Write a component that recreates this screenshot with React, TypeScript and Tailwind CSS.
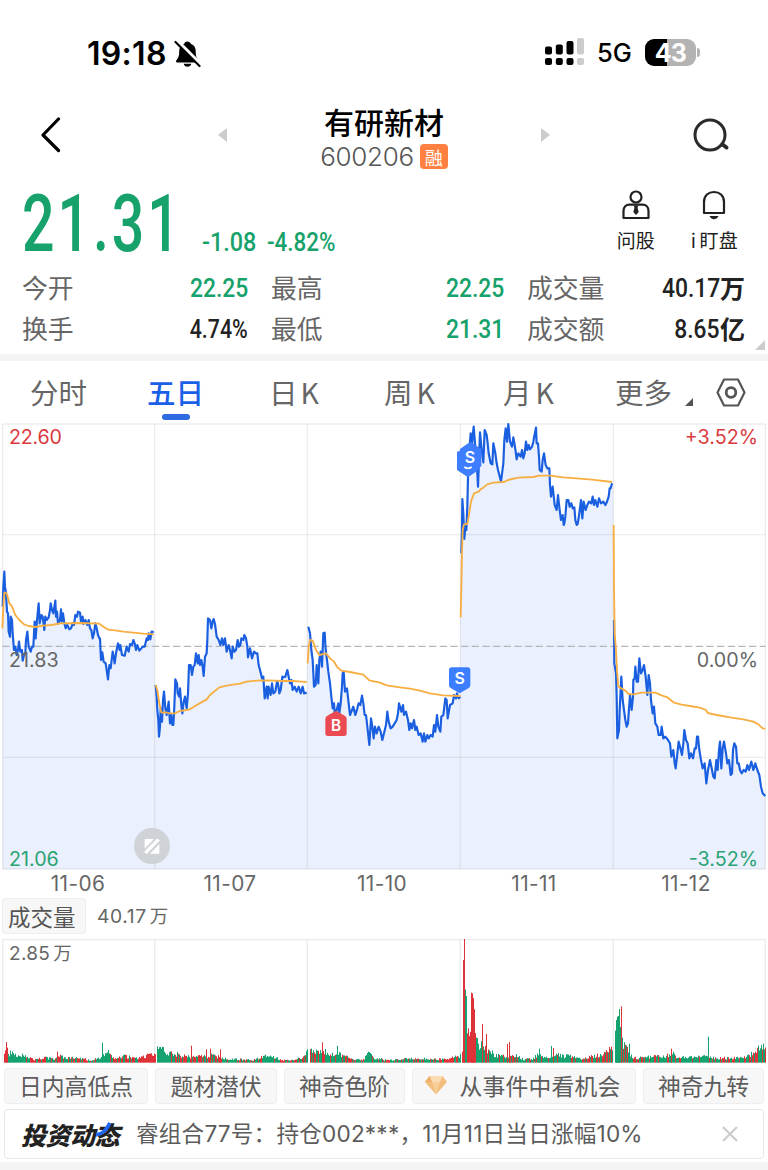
import clsx from "clsx";

const CJK = "font-['Noto_Sans_CJK_SC',sans-serif]";
const SANS = "font-['Inter','Noto_Sans_CJK_SC',sans-serif]";

const stats = [
  { label: "今开", value: "22.25", tone: "down" },
  { label: "最高", value: "22.25", tone: "down" },
  { label: "成交量", value: "40.17", unit: "万" },
  { label: "换手", value: "4.74%" },
  { label: "最低", value: "21.31", tone: "down" },
  { label: "成交额", value: "8.65", unit: "亿" },
];

const dates = ["11-06", "11-07", "11-10", "11-11", "11-12"];

// Chart space is 2304 x 1350, three units per pixel
const edges = [8, 464, 922, 1381, 1840, 2296];

const days = [
  {
    price:
      "8,560 10,500 13,455 15,500 18,520 21,575 24,580 26,635 30,650 32,590 36,600 38,640 42,690 46,680 50,705 54,690 57,665 61,695 66,690 68,722 72,705 76,700 78,660 82,635 86,680 92,695 96,680 100,680 102,640 104,605 107,655 111,600 116,550 119,610 124,585 128,590 133,630 136,590 140,600 146,592 150,570 152,550 156,570 160,580 166,542 168,590 171,575 174,610 180,600 183,568 185,605 189,580 193,610 197,625 202,615 208,628 213,625 218,610 222,615 226,585 231,590 234,575 240,578 243,605 248,590 250,612 256,600 262,615 266,600 270,625 274,630 278,655 282,640 286,610 290,625 294,645 298,655 300,655 303,720 307,697 311,725 317,730 320,750 324,778 328,735 332,745 338,695 341,710 344,730 348,700 354,670 359,690 361,675 366,705 374,707 380,680 386,695 390,672 396,675 400,660 404,670 408,690 412,675 418,692 424,685 428,680 434,680 440,655 444,660 446,640 451,658 455,635 461,636",
    average:
      "7,625 10,560 13,518 20,520 28,550 36,560 46,585 58,600 72,613 86,618 105,621 130,617 155,615 180,610 240,609 298,611 310,620 325,629 345,631 370,635 400,638 430,641 461,643",
  },
  {
    price:
      "467,795 470,830 472,870 475,900 477,950 480,920 482,865 486,905 489,840 492,815 496,865 500,885 506,845 510,910 514,885 517,915 520,915 523,860 526,778 531,790 533,820 538,830 540,805 544,855 547,880 551,845 555,830 560,865 564,820 567,735 572,735 576,765 580,740 584,735 588,700 593,730 596,705 600,735 604,720 608,740 611,768 615,710 620,700 622,660 624,595 630,600 634,625 638,605 641,597 645,612 650,650 656,660 661,675 666,655 670,675 675,655 680,695 686,675 690,690 695,715 698,680 703,695 708,690 713,660 717,680 721,675 724,655 730,660 733,645 738,655 742,680 744,712 750,685 756,715 762,695 768,700 772,700 776,735 780,750 786,775 790,770 794,835 800,800 803,835 806,800 812,825 816,790 820,820 826,815 831,785 834,790 838,820 842,810 847,770 850,772 856,770 862,750 865,765 870,790 874,780 878,810 884,800 890,815 896,800 902,820 908,800 912,820 920,818",
    average:
      "467,795 472,810 478,850 484,878 498,877 510,880 525,880 540,873 567,869 590,855 620,838 630,825 658,802 680,797 720,791 740,785 768,782 800,781 850,783 880,783 905,785 920,786",
  },
  {
    price:
      "925,620 930,640 934,690 938,720 942,800 947,795 950,735 955,790 958,720 962,695 966,740 970,640 974,638 977,690 981,720 985,755 990,790 994,830 998,865 1002,850 1005,890 1010,870 1015,850 1018,880 1022,850 1026,800 1028,760 1031,755 1035,815 1041,805 1046,850 1050,885 1056,870 1060,860 1066,885 1072,865 1076,850 1081,855 1086,827 1090,850 1094,885 1098,885 1102,920 1108,975 1113,895 1117,920 1121,955 1125,920 1130,940 1136,920 1142,935 1147,960 1152,940 1158,915 1162,875 1166,905 1172,925 1178,920 1184,910 1190,900 1194,880 1197,850 1204,875 1209,855 1212,885 1218,875 1224,900 1228,930 1232,910 1236,925 1242,900 1246,930 1250,920 1256,945 1262,940 1268,965 1272,940 1276,965 1282,945 1286,955 1292,945 1298,950 1302,915 1306,935 1311,885 1315,920 1321,935 1324,890 1330,885 1336,835 1340,840 1343,895 1350,855 1358,850 1362,825 1368,835 1371,820 1376,835 1381,830",
    average:
      "923,730 926,680 930,660 938,662 948,690 958,705 978,700 990,715 1002,725 1012,742 1025,752 1050,756 1090,764 1108,781 1140,788 1160,796 1200,802 1230,806 1260,812 1290,820 1330,826 1381,828",
  },
  {
    price:
      "1384,400 1386,330 1387,237 1390,280 1393,357 1396,320 1399,330 1402,260 1404,170 1408,90 1412,40 1416,70 1421,20 1425,70 1430,120 1434,200 1440,37 1445,90 1450,127 1454,30 1460,45 1463,70 1466,100 1472,130 1477,133 1480,70 1486,100 1490,130 1494,150 1498,165 1503,185 1510,130 1513,60 1517,25 1521,65 1525,12 1530,65 1536,80 1540,52 1544,75 1547,95 1550,118 1555,100 1562,110 1566,90 1570,115 1574,100 1578,65 1582,90 1586,75 1590,88 1596,80 1600,65 1603,48 1608,23 1610,70 1614,70 1617,110 1619,150 1625,155 1628,120 1632,100 1637,135 1642,145 1648,145 1650,195 1653,230 1658,200 1664,255 1670,270 1674,225 1679,270 1683,300 1688,285 1691,315 1693,310 1696,290 1700,240 1705,240 1709,260 1714,250 1718,265 1723,262 1726,300 1730,315 1733,312 1738,280 1743,240 1747,295 1751,245 1757,270 1762,255 1767,245 1774,250 1778,230 1782,255 1786,240 1792,260 1797,235 1803,250 1810,245 1816,255 1821,245 1826,230 1829,205 1832,205 1836,190",
    average:
      "1382,592 1384,500 1386,400 1388,330 1392,313 1402,312 1406,290 1413,245 1422,220 1436,215 1442,208 1450,203 1462,193 1480,188 1512,186 1524,180 1536,177 1556,173 1600,171 1618,167 1650,167 1690,172 1730,175 1776,179 1836,186",
  },
  {
    price:
      "1842,600 1843,730 1848,760 1850,830 1852,955 1857,930 1859,870 1864,770 1868,840 1872,870 1876,900 1880,920 1884,910 1886,880 1890,825 1895,870 1899,830 1900,780 1904,775 1906,740 1910,785 1914,785 1918,715 1923,760 1928,750 1932,735 1937,770 1942,825 1946,765 1950,790 1953,840 1958,880 1962,860 1966,910 1972,920 1976,945 1982,945 1985,920 1990,955 1996,950 2004,960 2010,970 2014,1010 2020,990 2024,1030 2027,1045 2031,1010 2036,965 2040,980 2046,1005 2050,970 2053,930 2058,960 2063,970 2068,1015 2073,1000 2079,1015 2084,985 2088,985 2091,950 2094,950 2098,990 2103,1020 2108,1045 2114,1030 2119,1090 2124,1050 2130,1020 2136,1050 2140,1070 2144,1075 2149,1020 2153,1050 2157,990 2160,965 2164,1045 2168,985 2172,965 2178,1000 2182,1030 2187,1020 2192,1065 2196,1060 2199,990 2203,970 2208,980 2212,1030 2216,1030 2220,1050 2225,1060 2231,1050 2237,1055 2242,1035 2247,1050 2254,1025 2260,1050 2266,1030 2272,1050 2278,1065 2283,1100 2288,1120 2296,1128",
    average:
      "1841,315 1842,500 1844,640 1848,690 1851,750 1855,800 1864,805 1876,812 1886,822 1900,823 1925,818 1966,818 1985,826 2002,832 2022,848 2045,854 2070,858 2100,863 2118,870 2123,879 2150,885 2190,892 2230,898 2260,905 2275,913 2288,925 2296,926",
  },
];

// [x, height, share of red bars] knots, interpolated between
const volume = [
  [[12, 45, 1], [20, 62, 1], [26, 38, 0.2], [45, 30, 0.1], [66, 34, 0.2], [82, 24, 0.6], [100, 11, 0.5], [135, 20, 0.6], [160, 14, 0.3], [175, 26, 0.6], [200, 18, 0.4], [240, 18, 0.7], [272, 8, 0.2], [300, 22, 0.1], [325, 34, 0.1], [340, 16, 0.3], [370, 26, 0.5], [410, 17, 0.6], [440, 28, 0.9], [465, 38, 0.8]],
  [[471, 55, 0.3], [484, 56, 0.1], [500, 32, 0.1], [520, 38, 0.2], [540, 30, 0.5], [560, 24, 0.4], [600, 24, 0.4], [640, 28, 0.3], [665, 20, 0.3], [690, 12, 0.2], [720, 14, 0.4], [760, 10, 0.4], [790, 30, 0.1], [825, 24, 0.3], [845, 9, 0.5], [880, 13, 0.6], [910, 20, 0.3], [922, 44, 0.2]],
  [[930, 54, 0.9], [945, 42, 0.4], [968, 46, 0.5], [985, 34, 0.1], [1010, 42, 0.1], [1035, 24, 0.4], [1065, 12, 0.4], [1090, 12, 0.3], [1103, 38, 0.1], [1125, 18, 0.2], [1165, 9, 0.4], [1230, 16, 0.2], [1290, 15, 0.4], [1340, 14, 0.7], [1380, 28, 0.5]],
  [[1387, 40, 1], [1389, 235, 1], [1394, 340, 1], [1397, 200, 0.1], [1402, 100, 0.3], [1408, 130, 0.7], [1414, 215, 1], [1420, 200, 1], [1426, 100, 0.5], [1436, 66, 0.1], [1450, 66, 0.3], [1465, 48, 0.4], [1485, 30, 0.3], [1520, 26, 0.4], [1545, 28, 0.4], [1570, 13, 0.3], [1600, 16, 0.4], [1617, 38, 0.2], [1635, 18, 0.3], [1662, 36, 0.2], [1690, 26, 0.2], [1715, 24, 0.2], [1740, 16, 0.5], [1775, 24, 0.4], [1800, 32, 0.6], [1839, 56, 0.9]],
  [[1846, 130, 0], [1852, 142, 0], [1858, 160, 0], [1863, 165, 0.5], [1868, 78, 0.3], [1880, 52, 0.2], [1900, 20, 0.6], [1930, 20, 0.2], [1965, 26, 0.1], [1985, 20, 0.2], [2018, 38, 0.4], [2030, 18, 0.5], [2075, 24, 0.1], [2120, 24, 0.4], [2150, 18, 0.4], [2190, 18, 0.7], [2230, 18, 0.4], [2256, 34, 0.4], [2275, 54, 0.4], [2296, 66, 0.3]],
];

const spikes = [
  { x: 20, h: 62, up: true },
  { x: 171, h: 33, up: true },
  { x: 308, h: 60, up: false },
  { x: 324, h: 38, up: false },
  { x: 575, h: 51, up: true },
  { x: 618, h: 40, up: true },
  { x: 630, h: 42, up: true },
  { x: 662, h: 40, up: true },
  { x: 968, h: 61, up: true },
  { x: 1011, h: 50, up: false },
  { x: 1391, h: 308, up: true },
  { x: 1394, h: 371, up: true },
  { x: 1398, h: 200, up: false },
  { x: 1413, h: 210, up: true },
  { x: 1416, h: 208, up: true },
  { x: 1419, h: 194, up: true },
  { x: 1422, h: 160, up: true },
  { x: 1447, h: 116, up: true },
  { x: 1460, h: 86, up: true },
  { x: 1522, h: 56, up: true },
  { x: 1529, h: 62, up: true },
  { x: 1617, h: 42, up: false },
  { x: 1654, h: 50, up: false },
  { x: 1659, h: 44, up: true },
  { x: 1848, h: 128, up: false },
  { x: 1851, h: 138, up: false },
  { x: 1855, h: 140, up: false },
  { x: 1859, h: 161, up: false },
  { x: 1864, h: 169, up: true },
  { x: 1889, h: 57, up: false },
  { x: 2013, h: 42, up: true },
  { x: 2124, h: 78, up: false },
];

function noise(n: number) {
  const v = Math.sin(n * 12.9898) * 43758.5453;
  return v - Math.floor(v);
}

function buildBars() {
  const bars: { x: number; h: number; up: boolean }[] = [];
  volume.forEach((knots) => {
    const end = knots[knots.length - 1][0];
    let i = 0;
    for (let x = knots[0][0]; x <= end; x += 3) {
      while (i < knots.length - 2 && x > knots[i + 1][0]) i++;
      const [x0, h0, r0] = knots[i];
      const [x1, h1, r1] = knots[i + 1];
      const t = (x - x0) / (x1 - x0);
      const scale = h0 + (h1 - h0) * t;
      bars.push({
        x,
        h: Math.max(5, scale * (0.5 + 0.5 * noise(x))),
        up: noise(x + 7777) < r0 + (r1 - r0) * t,
      });
    }
  });
  return [...bars, ...spikes];
}

const bars = buildBars();

function Num({ children, className }: { children: string; className?: string }) {
  return (
    <span className={clsx("inline-block font-['Roboto',sans-serif] font-medium tabular-nums", className)}>
      {children}
    </span>
  );
}

function StatusBar() {
  return (
    <div className={clsx(SANS, "flex h-[90px] items-start justify-between pt-[37px] pr-[68px] pl-[87px] text-black")}>
      <div className="flex items-center gap-[7px]">
        <span className="w-[80px] pt-px text-[32px] leading-[32px] font-semibold tracking-[0.300px]">19:18</span>
        <svg width="27" height="28" viewBox="0 0 27 28">
          <path
            d="M13.5 1.5c1.7 0 2.9 1 3.2 2.2 3.5 1.1 5 4 5 7.400 0 5.500 1 7 2.800 9.300.8 1 .3 2-.9 2H3.300c-1.300 0-1.700-1.100-1-2 2-2.400 2.900-3.800 2.900-9.300 0-3.400 1.600-6.300 5.100-7.400.3-1.300 1.500-2.200 3.200-2.200zM9.700 23.800h7.600c-.3 1.900-1.900 3-3.800 3s-3.500-1.100-3.800-3z"
            fill="#000"
          />
          <path d="M3.200 .8 27 24.500" stroke="#fff" strokeWidth="3.500" />
          <path d="M1.500 2 25.500 26" stroke="#000" strokeWidth="2.200" strokeLinecap="round" />
        </svg>
      </div>
      <div className="flex items-center">
        <svg width="39" height="28" viewBox="0 0 39 28">
          <rect x="0" y="8.500" width="7" height="8" rx="2" />
          <rect x="10.800" y="6.500" width="7" height="10" rx="2" />
          <rect x="21.500" y="3" width="7" height="13.500" rx="2" />
          <rect x="32" y="0" width="7" height="16.500" rx="2" fill="#ccc" />
          <rect x="0" y="20" width="7" height="7" rx="2" />
          <rect x="10.800" y="20" width="7" height="7" rx="2" />
          <rect x="21.500" y="20" width="7" height="7" rx="2" />
          <rect x="32" y="20" width="7" height="7" rx="2" fill="#ccc" />
        </svg>
        <span className="ml-[13px] w-[48px] pt-[2px] text-[25.500px] leading-[28px] font-medium">5G</span>
        <div className="flex items-center gap-px">
          <div className="flex h-[27px] w-[51px] items-center justify-center rounded-[9px] bg-[linear-gradient(90deg,#000_44%,#b3b3b3_44%)] pt-[2px] text-[25px] leading-[25px] font-bold tracking-[-0.800px] text-white">
            43
          </div>
          <span className="h-[9px] w-[3px] rounded-r-full bg-[#b3b3b3]" />
        </div>
      </div>
    </div>
  );
}

function TitleBar() {
  return (
    <header className="flex h-[90px] items-center pl-[40px]">
      <svg width="22" height="36" viewBox="0 0 22 36" fill="none" stroke="#000" strokeWidth="3.200" strokeLinecap="round" strokeLinejoin="round">
        <path d="M18.500 2 3 18l15.500 15.500" />
      </svg>
      <div className="ml-[156px] flex w-[332px] items-center justify-between">
        <svg width="9" height="14" viewBox="0 0 9 14" fill="#ccc">
          <path d="M9 0v14L0 7z" />
        </svg>
        <div className="flex flex-col items-center gap-[2px] pt-[5px]">
          <h1 className={clsx(CJK, "text-[30px] leading-[36px] font-medium text-black")}>有研新材</h1>
          <div className="flex items-center gap-[6px]">
            <span className={clsx(SANS, "text-[26px] leading-[32px] font-light tracking-[-0.300px] text-[#555]")}>600206</span>
            <span className={clsx(CJK, "flex h-[25px] w-[28px] items-center justify-center rounded-[4px] bg-[#ff8040] text-[18px] leading-none text-white")}>
              融
            </span>
          </div>
        </div>
        <svg width="9" height="14" viewBox="0 0 9 14" fill="#ccc">
          <path d="M0 0v14l9-7z" />
        </svg>
      </div>
      <svg className="ml-[142px]" width="38" height="36" viewBox="0 0 38 36" fill="none" stroke="#2b2b2b" strokeWidth="3" strokeLinecap="round">
        <circle cx="18" cy="18" r="15" />
        <path d="m30.500 27.500 4 3" strokeWidth="4" />
      </svg>
    </header>
  );
}

function Quote() {
  return (
    <section className="flex h-[88px] justify-between pr-[30px] pl-[22px] text-[#16a26a]">
      <div className="flex items-baseline">
        <Num className="w-[180px] origin-left scale-x-[.725] text-[79px] leading-[88px] font-medium tracking-[4px]">21.31</Num>
        <Num className="w-[65px] origin-left scale-x-[.9] text-[26px]">-1.08</Num>
        <Num className="origin-left scale-x-[.86] text-[26px]">-4.82%</Num>
      </div>
      <div className={clsx(CJK, "flex gap-[36px] pt-[10px] text-[19px] leading-[24px] text-[#222]")}>
        <button className="flex flex-col items-center gap-[8px]">
          <svg width="28" height="30" viewBox="0 0 28 30" fill="none" stroke="#222" strokeWidth="2.200" strokeLinejoin="round">
            <circle cx="14" cy="7" r="5.500" />
            <path d="M1.500 28V21c0-4 2.500-6.300 6-6.300h13c3.500 0 6 2.300 6 6.300v7z" />
            <path d="M12.500 16h3l-.5 2 1.200 4-2.200 2.500-2.200-2.500 1.200-4z" fill="#222" strokeWidth="1" />
          </svg>
          <span>问股</span>
        </button>
        <button className="flex flex-col items-center gap-[8px]">
          <svg width="24" height="30" viewBox="0 0 24 30" fill="none" stroke="#222" strokeWidth="2.200">
            <path d="M2 23V12C2 5.500 6.500 2 12 2s10 3.500 10 10v11z" strokeLinejoin="round" />
            <path d="M7.500 26h9c-1 2.500-3 3.200-4.500 3.200s-3.500-.7-4.500-3.200z" fill="#222" stroke="none" />
          </svg>
          <span className="flex gap-[3px] tracking-[0.300px]">
            <span>i</span>盯盘
          </span>
        </button>
      </div>
    </section>
  );
}

function Stats() {
  return (
    <section className="relative grid h-[86px] grid-cols-[226px_233px_218px] content-start gap-x-[23px] pl-[22px]">
      {stats.map((s) => (
        <div key={s.label} className="flex h-[41px] items-center justify-between">
          <span className={clsx(CJK, "pb-[3px] text-[25.800px] leading-[38px] text-[#666]")}>{s.label}</span>
          <span className={clsx("flex items-center", s.tone === "down" ? "text-[#16a26a]" : "text-[#222]")}>
            <Num className={clsx("origin-right text-[26px] leading-[41px]", s.value.endsWith("%") ? "scale-x-[.82]" : "scale-x-[.88]")}>
              {s.value}
            </Num>
            {s.unit && <span className={clsx(CJK, "pb-[3px] text-[25px] leading-[38px] font-bold")}>{s.unit}</span>}
          </span>
        </div>
      ))}
      <svg className="absolute right-[3px] bottom-[4px]" width="10" height="10" viewBox="0 0 10 10" fill="#ccc">
        <path d="M10 0v10H0z" />
      </svg>
    </section>
  );
}

function Tabs() {
  return (
    <nav className={clsx(CJK, "flex h-[59px] items-start pt-[11px] pl-[30px] text-[28.500px] leading-[40px] text-[#666]")}>
      <span className="w-[117px]">分时</span>
      <span className="flex w-[122px] flex-col font-medium text-[#1a5fe8]">
        五日
        <i className="mt-[2px] ml-[15px] h-[6px] w-[28px] rounded-full bg-[#2f6ae0]" />
      </span>
      <span className="flex w-[115px] gap-[3px]">日<span>K</span></span>
      <span className="flex w-[119px] gap-[4px]">周<span>K</span></span>
      <span className="flex w-[112px] gap-[4px]">月<span>K</span></span>
      <span className="flex w-[101px] items-end gap-[13px]">
        更多
        <svg className="mb-[6px]" width="8" height="8" viewBox="0 0 8 8" fill="#555">
          <path d="M8 0v8H0z" />
        </svg>
      </span>
      <svg className="mt-[6px]" width="30" height="29" viewBox="0 0 30 29" fill="none" stroke="#555" strokeWidth="2.200" strokeLinejoin="round">
        <path d="M8 1.500h14l6.500 13-6.500 13H8l-6.500-13z" />
        <circle cx="15" cy="14.500" r="4.800" strokeWidth="2.800" />
      </svg>
    </nav>
  );
}

function PriceChart() {
  return (
    <section className={clsx(SANS, "relative h-[450px] text-[19.700px] leading-[24px]")}>
      <svg className="block" width="768" height="450" viewBox="0 0 2304 1350" fill="none">
        {days.map((day, i) => (
          <path key={edges[i]} d={`M${day.price} H${edges[i + 1]}V1347H${edges[i]}V${day.price.split(" ")[0].split(",")[1]}z`} fill="#eaf0fd" />
        ))}
        <g stroke="#000" strokeOpacity="0.070" strokeWidth="4">
          <path d="M7 12H2297M7 344H2297M7 1012H2297M7 1347H2297" />
          <path d="M8 12V1347M464 12V1347M922 12V1347M1381 12V1347M1840 12V1347M2296 12V1347" />
        </g>
        <path d="M7 679H2297" stroke="#b5b7bb" strokeWidth="4" strokeDasharray="22 10" />
        <g strokeLinejoin="round">
          {days.map((day) => (
            <polyline key={day.price} points={day.price} stroke="#1a5fe0" strokeWidth="6.500" />
          ))}
          {days.map((day) => (
            <polyline key={day.average} points={day.average} stroke="#f7ae42" strokeWidth="5.500" />
          ))}
        </g>
        <g className="font-semibold" fill="#fff" fontSize="48" textAnchor="middle">
          <path d="M1371 96 1404 80l32 16v54l-32 22-33-22z" fill="#3d7dff" />
          <path d="M1411 65l33 22v52l-33 20-31-20V87z" fill="#3d7dff" />
          <text x="1410" y="128">S</text>
          <path d="M1393 141q11 8 22 0" stroke="#fff" strokeWidth="5" fill="none" />
          <path d="M1355 742h48q8 0 8 8v46q0 6-6 9l-26 15-26-15q-6-3-6-9v-46q0-8 8-8z" fill="#3d7dff" />
          <text x="1379" y="791">S</text>
          <path d="M1008 872l26 15q6 3 6 9v44q0 8-8 8h-48q-8 0-8-8v-44q0-6 6-9z" fill="#eb4a52" />
          <text x="1008" y="934" fontSize="46">B</text>
        </g>
        <circle cx="456" cy="1278" r="54" fill="#cfd2d6" />
        <path d="M434 1257h28l-28 29zM478 1301h-28l28-29z" fill="#fff" />
        <path d="M436 1299l40-41" stroke="#fff" strokeWidth="10" />
      </svg>
      <span className="absolute top-[5px] left-[9px] tracking-[-0.200px] text-[#d93b3f]">22.60</span>
      <span className="absolute top-[5px] right-[10px] text-[#d93b3f]">+3.52%</span>
      <span className="absolute top-[228px] left-[9px] text-[#666]">21.83</span>
      <span className="absolute top-[228px] right-[10px] text-[#666]">0.00%</span>
      <span className="absolute top-[427px] left-[9px] text-[#2ba374]">21.06</span>
      <span className="absolute top-[427px] right-[10px] text-[#2ba374]">-3.52%</span>
    </section>
  );
}

function VolumeChart() {
  return (
    <section className={SANS}>
      <div className="flex h-[42px] items-start pt-px pl-[2px] text-[#666]">
        <span className={clsx(CJK, "flex h-[36px] w-[84px] items-center rounded-[3px] border border-[#eee] bg-[#f7f7f7] pl-[5px] text-[22.500px] leading-none text-[#555]")}>
          成交量
        </span>
        <span className="ml-[11px] text-[19.300px] leading-[37px] tracking-[0.600px]">
          40.17<span className="ml-[3px] text-[18.500px]">万</span>
        </span>
      </div>
      <div className="relative h-[124px]">
        <svg className="block" width="768" height="124" viewBox="0 0 2304 372" fill="none">
          <path
            d="M7 2H2297M8 2V371M464 2V371M922 2V371M1381 2V371M1840 2V371M2296 2V371"
            stroke="#ebebeb"
            strokeWidth="4"
          />
          {bars.map((bar, i) => (
            <rect key={i} x={Math.floor(bar.x / 3) * 3} y={371 - bar.h} width="3" height={bar.h} fill={bar.up ? "#dd3338" : "#16a26e"} />
          ))}
        </svg>
        <span className="absolute top-[2px] left-[9px] text-[19px] leading-[24px] tracking-[0.300px] text-[#666]">
          2.85<span className="ml-[3px] text-[18.500px]">万</span>
        </span>
      </div>
    </section>
  );
}

function Gem() {
  return (
    <svg className="-mt-[3px] mr-[13px]" width="22" height="20" viewBox="0 0 22 20">
      <path d="M4.500 1h13L22 7 11 19.500 0 7z" fill="#f3bd7c" />
      <path d="M4.500 1h13L15 7H7z" fill="#fadcb2" />
      <path d="M7 7h8l-4 12.500z" fill="#f7cd98" />
      <path d="M0 7l4.500-6L7 7z" fill="#eeb06a" />
    </svg>
  );
}

function Chips() {
  const chip = "flex h-[36px] items-center justify-center rounded-[4px] border border-[#eee] bg-[#f7f7f7]";
  return (
    <div className={clsx(CJK, "flex gap-[7px] pt-[5px] pl-[4px] text-[22.800px] leading-none text-[#5c5c5c]")}>
      <span className={clsx(chip, "w-[144px]")}>日内高低点</span>
      <span className={clsx(chip, "w-[122px]")}>题材潜伏</span>
      <span className={clsx(chip, "w-[121px]")}>神奇色阶</span>
      <span className={clsx(chip, "w-[224px] pr-[3px]")}>
        <Gem />
        <span className="tracking-[0.200px]">从事件中看机会</span>
      </span>
      <span className={clsx(chip, "w-[121px]")}>神奇九转</span>
    </div>
  );
}

function NewsBanner() {
  return (
    <div className="mx-[4px] mt-[5px] flex h-[50px] items-center rounded-[4px] border border-[#e8e8e8] pr-[24px] pl-[16px]">
      <span className={clsx(CJK, "relative inline-block w-[115px] text-[25px] leading-[30px] font-black tracking-[-0.500px] whitespace-nowrap text-[#222] italic")}>
        投资动态
        <svg className="absolute top-[3px] left-[74px]" width="20" height="16" viewBox="0 0 20 16">
          <path d="M1 13C8 12 11 8 15 1" stroke="#1f66f0" strokeWidth="3.600" fill="none" />
        </svg>
      </span>
      <span className={clsx(SANS, "flex-1 text-[22.600px] leading-[30px] tracking-[0.200px] whitespace-nowrap text-[#5c5c5c]")}>
        睿组合77号：持仓002***，11月11日当日涨幅10%
      </span>
      <svg width="18" height="18" viewBox="0 0 18 18" stroke="#ccc" strokeWidth="2.200">
        <path d="m2 2 14 14M16 2 2 16" />
      </svg>
    </div>
  );
}

export default function App() {
  return (
    <main className="h-[1170px] w-[768px] overflow-hidden bg-white">
      <StatusBar />
      <TitleBar />
      <Quote />
      <Stats />
      <div className="h-[7px] bg-[#f4f4f4]" />
      <Tabs />
      <PriceChart />
      <div className={clsx(SANS, "grid h-[27px] grid-cols-[repeat(5,152px)] pl-[2px] text-center text-[20.800px] leading-[27px] tracking-[0.400px] text-[#666]")}>
        {dates.map((d) => (
          <span key={d}>{d}</span>
        ))}
      </div>
      <VolumeChart />
      <Chips />
      <NewsBanner />
      <div className="mt-[3px] h-[8px] bg-[#f4f4f4]" />
    </main>
  );
}
